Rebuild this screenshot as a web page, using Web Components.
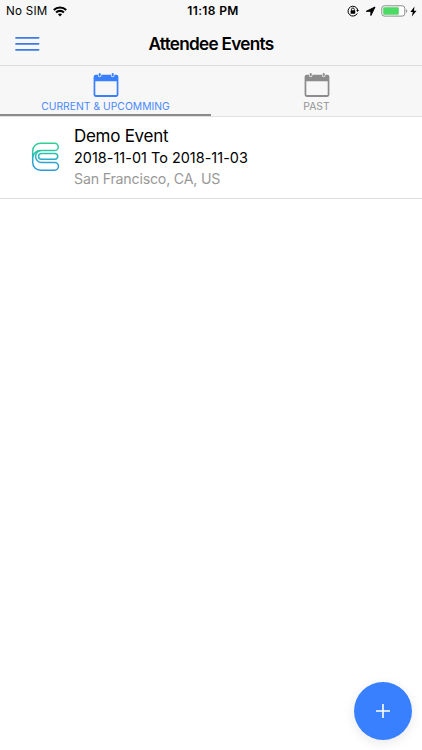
<!DOCTYPE html>
<html lang="en">
<head>
<meta charset="utf-8">
<meta name="viewport" content="width=device-width, initial-scale=1">
<title>Attendee Events</title>
<style>
html, body { margin: 0; height: 100%; }
body { background: #fff; font-family: Inter, "Liberation Sans", sans-serif; color: #000; overflow: hidden; }
</style>
</head>
<body>
<attendee-app></attendee-app>
<script>
const define = (name, html) => {
  const template = document.createElement('template');
  template.innerHTML = html;
  customElements.define(name, class extends HTMLElement {
    constructor() {
      super();
      this.attachShadow({ mode: 'open' }).append(template.content.cloneNode(true));
    }
  });
};

define('status-bar', `
<style>
:host { display: grid; grid-template-columns: 1fr auto 1fr; align-items: center; height: 22px; padding: 0 5px 0 6px; box-sizing: border-box; font-size: 11.6px; line-height: 22px; }
.left, .right { display: flex; align-items: center; }
.left { gap: 6px; }
.right { justify-content: flex-end; }
.sim { letter-spacing: .25px; }
.time { font-size: 12px; font-weight: 600; letter-spacing: .35px; padding-left: 3px; }
svg { display: block; }
</style>
<div class="left"><span class="sim">No SIM</span>
<svg width="14" height="11" viewBox="0 0 14 11" fill="none" stroke="#000" stroke-width="2.1"><path d="M.8 4.1C4.2.7 9.8.7 13.2 4.1M3.1 6.4c2.1-2.1 5.7-2.1 7.8 0"/><path d="M7 10.4 4.9 8.3c1.1-1.1 3.1-1.1 4.2 0z" fill="#000" stroke="none"/></svg></div>
<span class="time">11:18 PM</span>
<div class="right">
<svg width="12" height="12" viewBox="0 0 12 12" fill="none" stroke="#000"><path d="M10.3 8.4A4.9 4.9 0 1 1 10.7 5" stroke-width="1"/><path d="M9.2 5h2.8l-1.4 2z" fill="#000" stroke="none"/><path d="M4.5 5.6V4.4a1.4 1.4 0 0 1 2.8 0v1.2" stroke-width=".9"/><rect x="3.6" y="5.3" width="4.6" height="3.4" rx=".4" fill="#000" stroke="none"/></svg>
<svg style="margin-left:6px" width="11" height="11" viewBox="0 0 11 11"><path d="M10 1 5.900 9.500V5.300H1.300z" stroke="#000" stroke-width="1" stroke-linejoin="round"/></svg>
<svg style="margin-left:5px" width="27" height="12" viewBox="0 0 27 12"><rect x=".8" y=".8" width="23" height="10.3" rx="2.6" fill="#fff" stroke="#8b8b8b"/><rect x="2.2" y="2.2" width="15.6" height="7.5" rx="1" fill="#4cd964"/><path d="M25.1 4.2c1.5.5 1.5 3.1 0 3.6z" fill="#8b8b8b"/></svg>
<svg style="margin-left:2px" width="7" height="11" viewBox="0 0 7 11"><path d="M4.5.5.4 6h2.4L1.8 10.4 6.5 4.8H3.9z"/></svg>
</div>`);

define('nav-bar', `
<style>
:host { display: grid; grid-template-columns: 54px 1fr 54px; align-items: center; height: 44px; box-sizing: border-box; border-bottom: 1px solid #dcdcdc; }
button { all: unset; padding-left: 15px; }
svg { display: block; }
h1 { margin: 0; text-align: center; font-size: 17.2px; line-height: 24px; font-weight: 600; letter-spacing: -.72px; }
</style>
<button aria-label="Menu"><svg width="25" height="16" viewBox="0 0 25 16" stroke="#3e7bea" stroke-width="1.7" stroke-linecap="round"><path d="M1 1.800h22.600M1 7.800h22.600M1 13.800h22.600"/></svg></button>
<h1><slot></slot></h1>`);

define('event-tab', `
<style>
:host { display: flex; flex: 1; flex-direction: column; align-items: center; box-sizing: border-box; height: 51px; padding-top: 7px; color: #8c8c8c; border-bottom: 1px solid #e0e0e0; }
:host([selected]) { color: #3880ff; box-shadow: inset 0 -2px #8b8b8b; }
svg { display: block; flex: none; }
span { font-size: 10.3px; line-height: 15px; letter-spacing: .04px; opacity: .92; }
</style>
<svg width="26" height="26" viewBox="0 0 26 26" fill="currentColor"><path fill-rule="evenodd" d="M2.700 1.800h2.300v.8a1.700 1.700 0 0 0 3.400 0v-.8h9.600v.8a1.700 1.700 0 0 0 3.400 0v-.8h2q2 0 2 2.100v17.900q0 2.100-2.100 2.100H2.700q-2.100 0-2.100-2.100V3.900q0-2.100 2.100-2.100ZM2.300 8.200v13q0 .9.900.9h19.600q.9 0 .9-.9v-13Z"/><rect x="5.700" y="0" width="2" height="3.400" rx="1"/><rect x="18.700" y="0" width="2" height="3.400" rx="1"/></svg>
<span><slot></slot></span>`);

define('event-item', `
<style>
:host { display: flex; box-sizing: border-box; height: 82px; padding-left: 31px; border-bottom: 1px solid #dedede; }
svg { display: block; margin-top: 24px; flex: none; }
.info { margin: 9px 0 0 14px; white-space: nowrap; }
.title { font-size: 17px; line-height: 21px; letter-spacing: -.28px; }
.date { font-size: 14.400px; line-height: 21px; letter-spacing: .04px; }
.place { font-size: 14.200px; line-height: 21px; letter-spacing: -.2px; color: #999; }
</style>
<svg width="29" height="31" viewBox="0 0 29 31" fill="none" stroke="url(#g)" stroke-width="1.500"><defs><linearGradient id="g" x1="0" y1="2" x2="0" y2="29" gradientUnits="userSpaceOnUse"><stop stop-color="#30cf93"/><stop offset=".35" stop-color="#2cc6a8"/><stop offset=".62" stop-color="#2ba9d0"/><stop offset="1" stop-color="#2d98da"/></linearGradient></defs><path d="M9.500 2.300H23.600a3.650 3.650 0 0 1 0 7.300H9.500C5 9.600 1.700 13 1.700 17.200M9.500 2.300C5.100 2.300 1.700 5.700 1.700 10v11.500c0 4.400 3.400 7.700 7.800 7.700h14.100a3.900 3.900 0 0 0 0-7.800H10.500a5.900 5.900 0 0 1 0-11.800"/><path d="M10.500 12.400h13.300a2.950 2.950 0 0 1 0 5.900H10.500a2.950 2.950 0 0 1 0-5.900z"/></svg>
<div class="info"><div class="title"><slot name="title"></slot></div><div class="date"><slot name="date"></slot></div><div class="place"><slot name="place"></slot></div></div>`);

define('fab-button', `
<style>
:host { position: fixed; right: 10px; bottom: 10px; display: grid; place-items: center; width: 58px; height: 58px; border-radius: 50%; background: #3880ff; box-shadow: 0 3px 12px rgba(0,0,0,.09); }
svg { display: block; }
</style>
<svg width="16" height="16" viewBox="0 0 16 16" stroke="#fff" stroke-width="1.600"><path d="M8 1v14M1 8h14"/></svg>`);

define('attendee-app', `
<style>
:host { display: flex; flex-direction: column; min-height: 100vh; background: #fff; }
header { background: #f7f7f7; }
nav { display: flex; }
</style>
<header><status-bar></status-bar><nav-bar>Attendee Events</nav-bar>
<nav><event-tab selected>CURRENT &amp; UPCOMMING</event-tab><event-tab>PAST</event-tab></nav></header>
<main><event-item><span slot="title">Demo Event</span><span slot="date">2018-11-01 To 2018-11-03</span><span slot="place">San Francisco, CA, US</span></event-item></main>
<fab-button role="button" aria-label="Add event"></fab-button>`);
</script>
</body>
</html>
